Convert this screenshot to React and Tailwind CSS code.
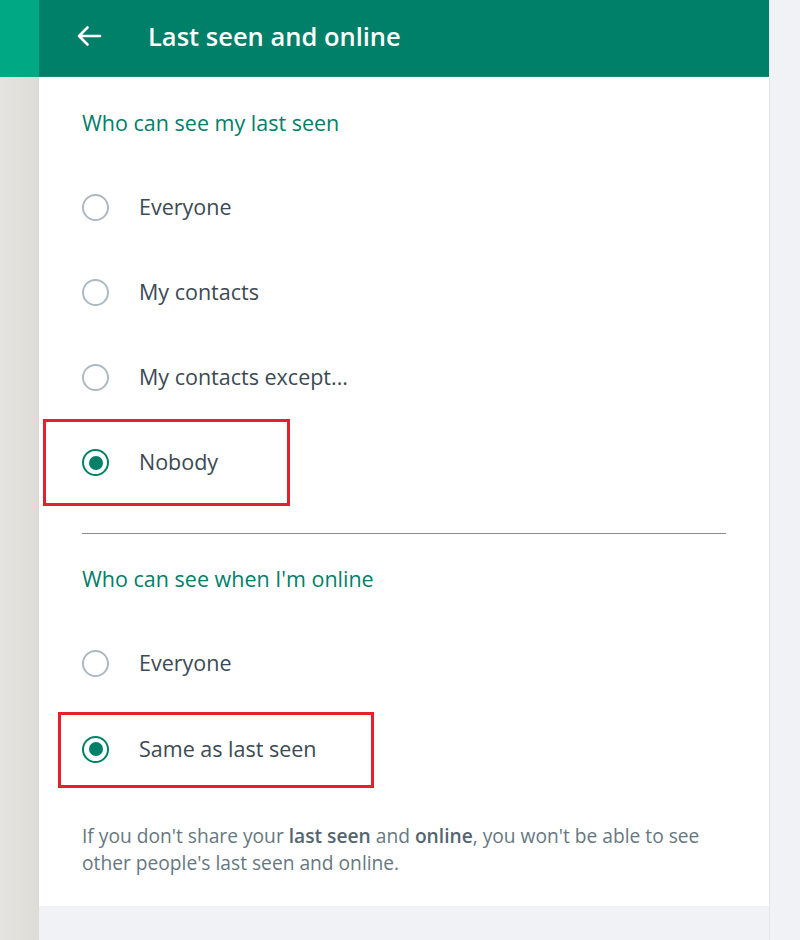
const font = { fontFamily: '"Open Sans", "Noto Sans", sans-serif' };

function Radio({ checked }) {
  return checked ? (
    <span className="flex h-[27px] w-[27px] items-center justify-center rounded-full border-[2.5px] border-[#008069]">
      <span className="h-[14px] w-[14px] rounded-full bg-[#008069]" />
    </span>
  ) : (
    <span className="h-[27px] w-[27px] rounded-full border-[2.5px] border-[#aebac1]" />
  );
}

function Option({ label, checked, h = "h-[85px]", box }) {
  return (
    <div className={`relative flex items-center pl-[43px] ${h}`}>
      <Radio checked={checked} />
      <span className="ml-[30px] text-[21.5px] text-[#3b4a54]">{label}</span>
      {box && <div className={`pointer-events-none absolute border-[3px] border-[#e5202a] ${box}`} />}
    </div>
  );
}

export default function App() {
  return (
    <div className="flex h-[940px] w-[800px] overflow-hidden bg-[#f0f2f5]" style={font}>
      <div className="flex w-[39px] flex-col">
        <div className="h-[77px] bg-[#00a884]" />
        <div className="flex-1 bg-gradient-to-r from-[#e6e4e0] to-[#dedcd7]" />
      </div>

      <div className="flex w-[730px] flex-col">
        <div className="flex h-[77px] items-center border-b border-[#1d8a6c] bg-[#008069] text-white">
          <svg className="-mt-[4px] ml-[37px]" width="26" height="22" viewBox="0 0 26 22" fill="none" stroke="white" strokeWidth="2.6" strokeLinecap="round" strokeLinejoin="round">
            <path d="M24 11H3M11.5 2.5 3 11l8.5 8.5" />
          </svg>
          <h1 className="-mt-[4px] ml-[46px] text-[25.5px] font-semibold">Last seen and online</h1>
        </div>

        <div className="bg-white pb-[30px] shadow-[0_1px_2px_rgba(0,0,0,0.06)]">
          <div className="mt-[32px] h-[28px] pl-[43px] text-[21.5px] leading-[28px] text-[#008069]">Who can see my last seen</div>
          <div className="mt-[28px]">
            <Option label="Everyone" />
            <Option label="My contacts" />
            <Option label="My contacts except..." />
            <Option label="Nobody" checked box="left-[4px] top-[-1px] h-[87px] w-[247px]" />
          </div>

          <div className="ml-[43px] mr-[43px] mt-[28px] h-px bg-[#8a8a8a]" />

          <div className="mt-[31px] h-[28px] pl-[43px] text-[21.5px] leading-[28px] text-[#008069]">Who can see when I'm online</div>
          <div className="mt-[27px]">
            <Option label="Everyone" h="h-[86px]" />
            <Option label="Same as last seen" checked h="h-[86px]" box="left-[19px] top-[6px] h-[76px] w-[316px]" />
          </div>

          <p className="mt-[30px] pl-[43px] pr-[40px] text-[19.2px] leading-[27px] text-[#667781]">
            If you don't share your <b className="font-semibold text-[#54656f]">last seen</b> and{" "}
            <b className="font-semibold text-[#54656f]">online</b>, you won't be able to see other people's last seen and online.
          </p>
        </div>
        <div className="flex-1 bg-[#f0f2f5]" />
      </div>

      <div className="flex-1 border-l border-[#e4e7ea] bg-[#f0f2f5]" />
    </div>
  );
}
